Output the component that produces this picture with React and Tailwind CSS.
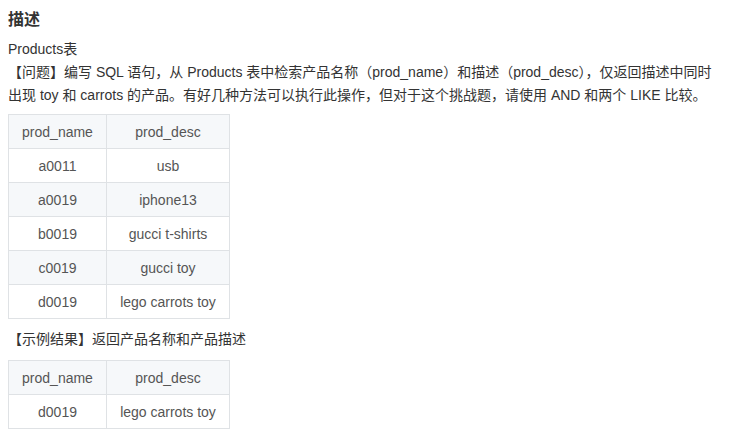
const PRODUCTS = [
  ['a0011', 'usb'],
  ['a0019', 'iphone13'],
  ['b0019', 'gucci t-shirts'],
  ['c0019', 'gucci toy'],
  ['d0019', 'lego carrots toy'],
]

const RESULT = [['d0019', 'lego carrots toy']]

function DataTable({ rows }) {
  return (
    <table className="table-fixed border-collapse w-[221px] text-[#555] text-sm">
      <colgroup>
        <col className="w-[98px]" />
        <col className="w-[123px]" />
      </colgroup>
      <thead>
        <tr className="bg-[#f6f8fa]">
          <th className="h-[34px] border border-[#dfe2e5] font-normal text-center p-0">prod_name</th>
          <th className="h-[34px] border border-[#dfe2e5] font-normal text-center p-0">prod_desc</th>
        </tr>
      </thead>
      <tbody>
        {rows.map(([name, desc], i) => (
          <tr key={name + desc} className={i % 2 === 1 ? 'bg-[#f6f8fa]' : 'bg-white'}>
            <td className="h-[34px] border border-[#dfe2e5] text-center p-0">{name}</td>
            <td className="h-[34px] border border-[#dfe2e5] text-center p-0">{desc}</td>
          </tr>
        ))}
      </tbody>
    </table>
  )
}

export default function App() {
  return (
    <div
      className="w-[733px] h-[445px] bg-white px-2 text-[#333] overflow-hidden"
      style={{ fontFamily: '"Liberation Sans", Arial, "Noto Sans CJK SC", sans-serif' }}
    >
      <h3 className="pt-2 text-base font-bold leading-6 text-[#333]">描述</h3>

      <div className="mt-[6px] text-sm leading-[23px]">
        <p>Products表</p>
        <p>
          【问题】编写 SQL 语句，从 Products 表中检索产品名称（prod_name）和描述（prod_desc），仅返回描述中同时
          <br />
          出现 toy 和 carrots 的产品。有好几种方法可以执行此操作，但对于这个挑战题，请使用 AND 和两个 LIKE 比较。
        </p>
      </div>

      <div className="mt-[7px]">
        <DataTable rows={PRODUCTS} />
      </div>

      <p className="mt-[9px] text-sm leading-[23px]">【示例结果】返回产品名称和产品描述</p>

      <div className="mt-[9px]">
        <DataTable rows={RESULT} />
      </div>
    </div>
  )
}
